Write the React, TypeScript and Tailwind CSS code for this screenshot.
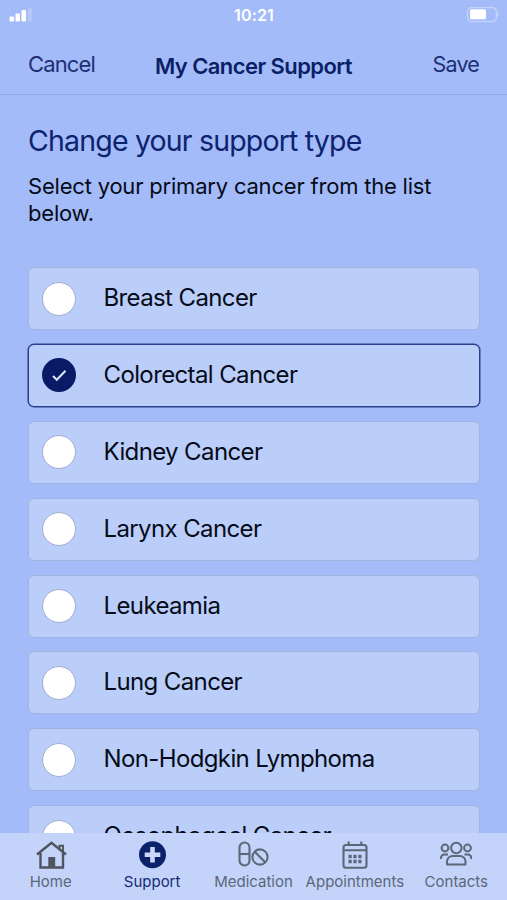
const cancerTypes = [
  'Breast Cancer',
  'Colorectal Cancer',
  'Kidney Cancer',
  'Larynx Cancer',
  'Leukeamia',
  'Lung Cancer',
  'Non-Hodgkin Lymphoma',
  'Oesophageal Cancer',
];

function HomeIcon() {
  return (
    <svg className="h-7 w-8 text-[#4f545e]" viewBox="0 0 32 28" fill="none" stroke="currentColor" strokeWidth="2.4">
      <path d="M2 13.500 16.500 1.800 31 13.500" />
      <path d="M24.500 8V4.800h3.500v6.200" strokeWidth="1.900" />
      <path d="M5.500 12v14.500h22.500v-14.500" />
      <path d="M13.300 27V16h6.900v11z" fill="currentColor" stroke="none" />
    </svg>
  );
}

function SupportIcon() {
  return (
    <svg className="h-7 w-8" viewBox="0 0 32 28" fill="none">
      <circle cx="16.500" cy="13.800" r="13.500" fill="#0b226b" />
      <path d="M16.500 6v15.600M8.700 13.800h15.600" stroke="#c9d8fb" strokeWidth="4.600" />
    </svg>
  );
}

function MedicationIcon() {
  return (
    <svg className="h-7 w-8" viewBox="0 0 32 28" fill="none" stroke="currentColor" strokeWidth="2.100">
      <rect x="2.500" y="1.500" width="10" height="23" rx="5" />
      <path d="M2.500 13h10" />
      <circle cx="23" cy="16" r="7.600" />
      <path d="m17.600 10.600 10.800 10.800" />
    </svg>
  );
}

function AppointmentsIcon() {
  return (
    <svg className="h-7 w-8" viewBox="0 0 32 28" fill="none" stroke="currentColor" strokeWidth="2.100">
      <rect x="4.500" y="4" width="23" height="22.800" rx="2.500" />
      <path d="M4.500 9.200h23M9.700 0.500v4M22.300 0.500v4" />
      <path d="M9.500 15.500h3.200m1.700 0h3.200m1.700 0h3.200M9.500 20.500h3.200m1.700 0h3.200m1.700 0h3.200" strokeWidth="3.400" />
    </svg>
  );
}

function ContactsIcon() {
  return (
    <svg className="h-7 w-8" viewBox="0 0 32 28" fill="none" stroke="currentColor" strokeWidth="2">
      <circle cx="16.300" cy="7" r="5.200" />
      <circle cx="5" cy="7" r="3.400" />
      <circle cx="27.500" cy="7" r="3.400" />
      <path d="M7 23.500v-3a5.500 5.500 0 0 1 5.500-5.500H20a5.500 5.500 0 0 1 5.500 5.500v3z" strokeLinejoin="round" />
      <path d="M1 18V16.800a3.300 3.300 0 0 1 3.300-3.300H8M31.200 18V16.800a3.300 3.300 0 0 0-3.300-3.300H24.500" />
    </svg>
  );
}

const tabs = [
  { label: 'Home', icon: HomeIcon },
  { label: 'Support', icon: SupportIcon, active: true },
  { label: 'Medication', icon: MedicationIcon },
  { label: 'Appointments', icon: AppointmentsIcon },
  { label: 'Contacts', icon: ContactsIcon },
];

function StatusBar() {
  return (
    <div className="flex h-[30px] items-center justify-between pr-2 pl-[9px] text-white">
      <svg className="h-4 w-12" viewBox="0 0 48 16" fill="currentColor">
        <rect x="0.500" y="9.500" width="4.500" height="5" rx="1" />
        <rect x="6.500" y="6.500" width="4.500" height="8" rx="1" />
        <rect x="12.500" y="3" width="4.500" height="11.500" rx="1" />
        <rect x="18.500" y="1" width="4.500" height="13.500" rx="1" opacity="0.200" />
      </svg>
      <span className="text-base font-semibold tracking-[0.2px]">10:21</span>
      <svg className="h-4 w-12" viewBox="0 0 48 16">
        <rect x="16.500" y="0.500" width="29" height="14" rx="4.500" fill="none" stroke="white" strokeOpacity="0.350" strokeWidth="1.500" />
        <rect x="19" y="2.300" width="16" height="10" rx="1.500" fill="white" />
        <path d="M47 5.500v4" stroke="white" strokeOpacity="0.350" strokeWidth="1.500" />
      </svg>
    </div>
  );
}

function CancerOption({ label, selected }: { label: string; selected: boolean }) {
  return (
    <li
      className={`flex h-[63px] shrink-0 items-center rounded-md border bg-[#bbcef9] pl-[13px] ${
        selected ? 'border-[#2b408c] ring-[0.5px] ring-[#2b408c]' : 'border-[#a3b3df]'
      }`}
    >
      {selected ? (
        <span className="flex size-[34px] items-center justify-center rounded-full bg-[#0b1a66]">
          <svg className="size-4" viewBox="0 0 16 16" fill="none" stroke="#dfe7fc" strokeWidth="2">
            <path d="m2 9 3.800 3.800 8.700-9" />
          </svg>
        </span>
      ) : (
        <span className="size-[34px] rounded-full border border-[#a0acd2] bg-white" />
      )}
      <span className="ml-[27.5px] pb-px text-2xl tracking-[-0.62px] text-[#060b18]">{label}</span>
    </li>
  );
}

export default function App() {
  return (
    <div className="flex h-[900px] w-[507px] flex-col overflow-hidden bg-[#a3bbf8] font-['Inter','Liberation_Sans',sans-serif]">
      <StatusBar />
      <header className="grid h-[65px] shrink-0 grid-cols-[1fr_auto_1fr] items-center border-b border-[#8fa8e4] px-7 text-[#1d2f75]">
        <button className="justify-self-start pt-1 text-[22px] tracking-[-0.85px]">Cancel</button>
        <h1 className="pt-2 text-[22px] font-semibold tracking-[-0.58px] text-[#0b1f66]">My Cancer Support</h1>
        <button className="justify-self-end pt-1 text-[21.5px] tracking-[-0.8px]">Save</button>
      </header>

      <main className="flex min-h-0 flex-1 flex-col overflow-hidden pt-[26px] pr-[27px] pl-7">
        <h2 className="text-[28.5px] leading-10 tracking-[-0.82px] text-[#0d2370]">Change your support type</h2>
        <p className="mt-3 text-[22px] leading-[27px] tracking-[-0.2px] text-[#060b18]">
          Select your primary cancer from the list below.
        </p>
        <ul className="mt-10 flex flex-col gap-[13.9px]">
          {cancerTypes.map((type) => (
            <CancerOption key={type} label={type} selected={type === 'Colorectal Cancer'} />
          ))}
        </ul>
      </main>

      <nav className="grid h-[67px] shrink-0 grid-cols-5 bg-[#c3d3fa]">
        {tabs.map(({ label, icon: Icon, active }) => (
          <button
            key={label}
            className={`flex flex-col items-center pt-2 ${active ? 'text-[#162a78]' : 'text-[#5c6778]'}`}
          >
            <Icon />
            <span className="mt-[3px] text-[15px] leading-5 whitespace-nowrap">{label}</span>
          </button>
        ))}
      </nav>
    </div>
  );
}
